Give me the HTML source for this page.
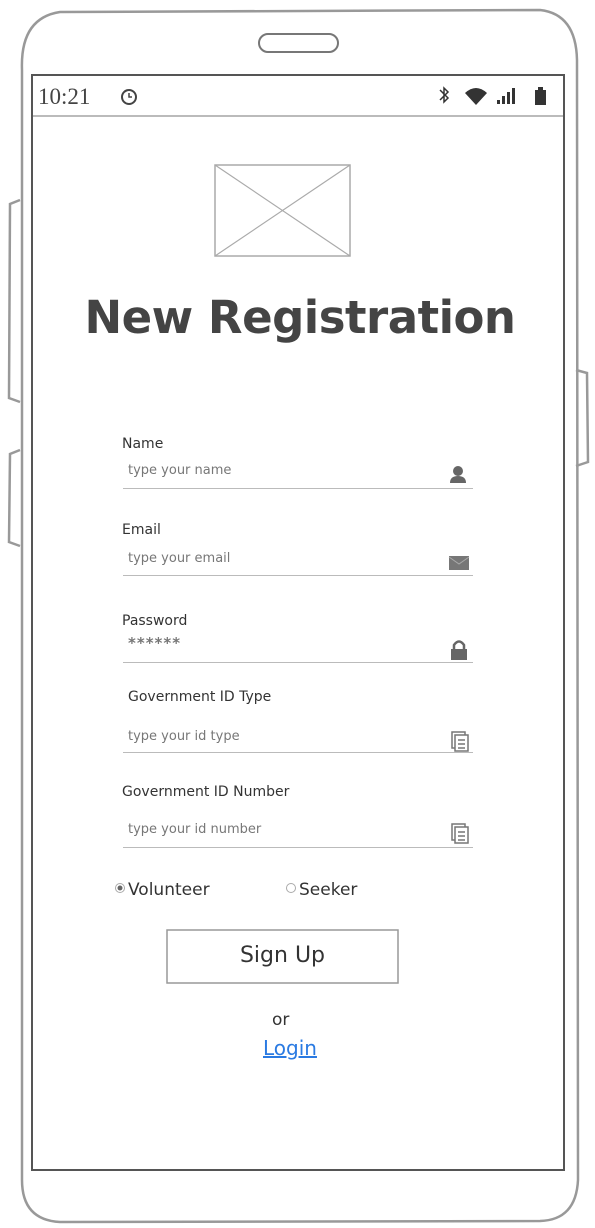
<!DOCTYPE html>
<html><head><style>
body{margin:0;width:595px;height:1228px;background:#fff;position:relative;font-family:"DejaVu Sans","Liberation Sans",sans-serif;color:#444;overflow:hidden}
.a{position:absolute}
.lbl{position:absolute;font-size:14px;color:#333;left:122px}
.ph{position:absolute;font-size:13px;color:#777;left:128px}
.ln{position:absolute;left:123px;width:350px;height:0;border-top:1.5px solid #bbb}
</style></head><body>
<svg class="a" style="left:0;top:0" width="595" height="1228">
<path d="M60 12 L540 10 Q576 14 577 60 L578 1180 Q576 1220 540 1221 L60 1222 Q22 1220 22 1180 L22 70 Q20 18 60 12 Z" fill="none" stroke="#999" stroke-width="2.5"/>
<path d="M20 200 L10 204 L9 398 L20 402" fill="none" stroke="#999" stroke-width="2.5"/>
<path d="M20 450 L10 454 L9 542 L20 546" fill="none" stroke="#999" stroke-width="2.5"/>
<path d="M576 370 L587 373 L588 462 L576 466" fill="none" stroke="#999" stroke-width="2.5"/>
<rect x="259" y="34" width="79" height="18" rx="9" fill="none" stroke="#777" stroke-width="2"/>
<rect x="32" y="75" width="532" height="1095" fill="none" stroke="#555" stroke-width="2"/>
<line x1="33" y1="116" x2="563" y2="116" stroke="#bbb" stroke-width="2"/>
<rect x="215" y="165" width="135" height="91" fill="none" stroke="#aaa" stroke-width="1.5"/>
<line x1="215" y1="165" x2="350" y2="256" stroke="#aaa" stroke-width="1.2"/>
<line x1="350" y1="165" x2="215" y2="256" stroke="#aaa" stroke-width="1.2"/>
<circle cx="129" cy="97" r="7" fill="none" stroke="#444" stroke-width="2"/>
<path d="M129 93 V97 H132" fill="none" stroke="#444" stroke-width="1.5"/>
<path d="M440 90 L448 98 L444 102 V88 L448 92 L440 100" fill="none" stroke="#333" stroke-width="1.5"/>
<path d="M465 93 Q476 83 487 93 L476 105 Z" fill="#333"/>
<rect x="497" y="100" width="3" height="4" fill="#333"/><rect x="502" y="96" width="3" height="8" fill="#333"/><rect x="507" y="92" width="3" height="12" fill="#333"/><rect x="512" y="88" width="3" height="16" fill="#333"/>
<rect x="535" y="90" width="11" height="15" fill="#333"/><rect x="538" y="87" width="5" height="3" fill="#333"/>
<circle cx="458" cy="471" r="5" fill="#666"/><path d="M450 483 Q450 476 458 476 Q466 476 466 483 Z" fill="#666"/>
<rect x="449" y="556" width="20" height="14" fill="#777"/><path d="M449 557 L459 564 L469 557" fill="none" stroke="#aaa" stroke-width="1"/>
<rect x="451" y="649" width="16" height="11" fill="#666"/><path d="M454 649 V645 Q459 638 464 645 V649" fill="none" stroke="#666" stroke-width="2.5"/>
<g fill="none" stroke="#777" stroke-width="1.5"><rect x="452" y="732" width="13" height="16"/><rect x="455" y="735" width="13" height="16" fill="#fff"/><path d="M458 740H465M458 744H465M458 748H465"/>
<rect x="452" y="824" width="13" height="16"/><rect x="455" y="827" width="13" height="16" fill="#fff"/><path d="M458 832H465M458 836H465M458 840H465"/></g>
<circle cx="120" cy="888" r="4.5" fill="none" stroke="#aaa"/><circle cx="120" cy="888" r="2.5" fill="#666"/>
<circle cx="291" cy="888" r="4.5" fill="none" stroke="#aaa"/>
<rect x="167" y="930" width="231" height="53" fill="none" stroke="#999" stroke-width="1.5"/>
</svg>
<div class="a" style="left:38px;top:84px;font-family:'Liberation Serif',serif;font-size:23px;color:#444">10:21</div>
<div class="a" style="left:0;width:600px;text-align:center;top:291px;font-size:45px;font-weight:bold;color:#444;letter-spacing:-0.5px">New Registration</div>
<div class="lbl" style="top:436px">Name</div>
<div class="ph" style="top:463px">type your name</div>
<div class="ln" style="top:488px"></div>
<div class="lbl" style="top:522px">Email</div>
<div class="ph" style="top:551px">type your email</div>
<div class="ln" style="top:575px"></div>
<div class="lbl" style="top:613px">Password</div>
<div class="ph" style="top:634px;font-size:15px;font-weight:bold;letter-spacing:1px">******</div>
<div class="ln" style="top:662px"></div>
<div class="lbl" style="top:689px;left:128px">Government ID Type</div>
<div class="ph" style="top:729px">type your id type</div>
<div class="ln" style="top:752px"></div>
<div class="lbl" style="top:784px">Government ID Number</div>
<div class="ph" style="top:822px">type your id number</div>
<div class="ln" style="top:847px"></div>
<div class="a" style="left:128px;top:880px;font-size:17px;color:#333">Volunteer</div>
<div class="a" style="left:299px;top:880px;font-size:17px;color:#333">Seeker</div>
<div class="a" style="left:167px;width:231px;text-align:center;top:943px;font-size:22px;color:#333">Sign Up</div>
<div class="a" style="left:272px;top:1010px;font-size:17px;color:#333">or</div>
<div class="a" style="left:263px;top:1036px;font-size:20px;color:#2a7ae2;text-decoration:underline">Login</div>
</body></html>
